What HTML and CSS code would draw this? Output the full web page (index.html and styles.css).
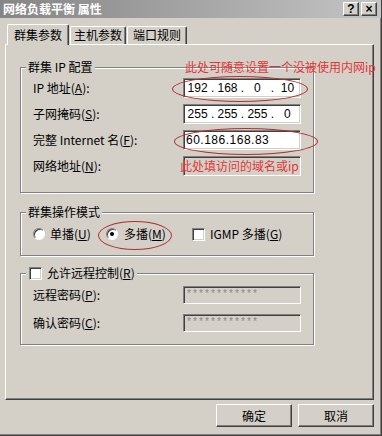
FILE: index.html
```html
<!DOCTYPE html>
<html lang="zh-CN">
<head>
  <meta charset="UTF-8" />
  <title>网络负载平衡 属性</title>
  <link rel="stylesheet" href="styles.css">
</head>
<body>

  <div class="window">
    <div class="titlebar">
      <span class="title-text">网络负载平衡 属性</span>
      <div class="title-buttons">
        <button class="title-btn">?</button>
        <button class="title-btn">×</button>
      </div>
    </div>

    <div class="content">
      <div class="tabs">
        <div class="tab tab-1 active">群集参数</div>
        <div class="tab tab-2">主机参数</div>
        <div class="tab tab-3">端口规则</div>
      </div>

      <div class="panel">
        <fieldset class="group group-ip">
          <legend>群集 IP 配置</legend>
          <div class="group-body">
            <div class="row">
              <label class="label">IP 地址(<u>A</u>):</label>
              <div class="field ip">
                <span class="octet">192</span><span class="dot">.</span><span class="octet">168</span><span class="dot">.</span><span class="octet">0</span><span class="dot">.</span><span class="octet">10</span>
              </div>
            </div>
            <div class="row">
              <label class="label">子网掩码(<u>S</u>):</label>
              <div class="field ip">
                <span class="octet">255</span><span class="dot">.</span><span class="octet">255</span><span class="dot">.</span><span class="octet">255</span><span class="dot">.</span><span class="octet">0</span>
              </div>
            </div>
            <div class="row">
              <label class="label">完整 Internet 名(<u>F</u>):</label>
              <div class="field name">60.186.168.83</div>
            </div>
            <div class="row">
              <label class="label">网络地址(<u>N</u>):</label>
              <div class="field disabled"></div>
            </div>
          </div>
        </fieldset>

        <fieldset class="group group-mode">
          <legend>群集操作模式</legend>
          <div class="group-body">
            <div class="options">
              <div class="option opt-uni"><span class="radio"></span><span>单播(<u>U</u>)</span></div>
              <div class="option opt-multi"><span class="radio checked"></span><span>多播(<u>M</u>)</span></div>
              <div class="option"><span class="check"></span><span>IGMP 多播(<u>G</u>)</span></div>
            </div>
          </div>
        </fieldset>

        <fieldset class="group group-remote">
          <legend><span class="check"></span><span>允许远程控制(<u>R</u>)</span></legend>
          <div class="group-body">
            <div class="row row-tall">
              <label class="label">远程密码(<u>P</u>):</label>
              <div class="field disabled pw">************</div>
            </div>
            <div class="row row-tall">
              <label class="label">确认密码(<u>C</u>):</label>
              <div class="field disabled pw">************</div>
            </div>
          </div>
        </fieldset>
      </div>

      <div class="actions">
        <button class="btn">确定</button>
        <button class="btn">取消</button>
      </div>
    </div>

    <!-- anotações em vermelho por cima do diálogo -->
    <div class="note note-ip">此处可随意设置一个没被使用内网ip</div>
    <div class="note note-name">此处填访问的域名或ip</div>
    <div class="ring ring-ip"></div>
    <div class="ring ring-name"></div>
    <div class="ring ring-multi"></div>
  </div>

</body>
</html>
```

FILE: styles.css
```css
* {
  box-sizing: border-box;
}

body {
  margin: 0;
  font-family: "Noto Sans CJK SC", "Liberation Sans", sans-serif;
  font-size: 12px;
  line-height: 14px;
  color: #000;
  background: #d4d0c8;
}

.window {
  position: relative;
  width: 382px;
  height: 436px;
  background: #d4d0c8;
  border-right: 1px solid #404040;
  border-bottom: 1px solid #404040;
  box-shadow: inset -1px -1px 0 #808080;
}

.titlebar {
  height: 18px;
  display: flex;
  align-items: center;
  justify-content: space-between;
  padding: 0 4px 0 3px;
  background: linear-gradient(to right, #858585, #c4c4c4);
  color: #fff;
  font-weight: bold;
}

.title-buttons {
  display: flex;
  gap: 2px;
}

.title-btn {
  width: 16px;
  height: 14px;
  padding: 0;
  border: 1px solid;
  border-color: #fff #404040 #404040 #fff;
  box-shadow: inset -1px -1px 0 #808080;
  background: #d4d0c8;
  color: #000;
  font: bold 12px/12px "Liberation Sans", sans-serif;
}

.content {
  padding: 6px 0 0 5px;
}

.tabs {
  display: flex;
  align-items: flex-end;
  height: 20px;
  padding-left: 2px;
  gap: 1px;
}

.tab {
  height: 18px;
  border: 1px solid #fff;
  border-bottom: none;
  border-right-color: #404040;
  box-shadow: inset -1px 0 0 #808080;
  border-radius: 2px 2px 0 0;
  line-height: 16px;
  text-align: center;
  background: #d4d0c8;
}

.tab-1 { width: 62px; }
.tab-2 { width: 56px; }
.tab-3 { width: 60px; }

.tab.active {
  height: 21px;
  margin-bottom: -1px;
  line-height: 19px;
  position: relative;
  z-index: 1;
}

.panel {
  width: 369px;
  height: 356px;
  border: 1px solid;
  border-color: #fff #404040 #404040 #fff;
  box-shadow: inset -1px -1px 0 #808080;
  padding: 15px 0 0 14px;
}

.group {
  width: 294px;
  min-width: 0;
  margin: 0;
  padding: 0;
  border: 1px solid #808080;
  box-shadow: 1px 1px 0 #fff, inset 1px 1px 0 #fff;
}

.group legend {
  margin-left: 5px;
  padding: 0 2px;
  height: 14px;
  line-height: 14px;
  background: #d4d0c8;
  display: flex;
  align-items: center;
  gap: 5px;
}

.group-ip .group-body {
  padding: 1px 12px 13px;
}

.group-mode {
  margin-top: 12px;
}

.group-mode .group-body {
  padding: 5px 12px 11px;
}

.group-remote {
  margin-top: 10px;
}

.group-remote legend {
  padding-left: 3px;
}

.group-remote .group-body {
  padding: 1px 12px 7px;
}

.row {
  display: flex;
  align-items: center;
  height: 26px;
}

.row-tall {
  height: 28px;
}

.label {
  width: 150px;
}

.field {
  width: 118px;
  height: 20px;
  border: 1px solid;
  border-color: #808080 #fff #fff #808080;
  box-shadow: inset 1px 1px 0 #404040, inset -1px -1px 0 #d4d0c8;
  background: #fff;
  padding: 0 1px 0 2px;
  display: flex;
  align-items: center;
  font-family: "Liberation Sans", sans-serif;
}

.field.disabled {
  background: #d4d0c8;
  color: #8a8a8a;
}

.field.name {
  letter-spacing: 0.5px;
}

.field.pw {
  height: 18px;
  font-family: "Liberation Mono", monospace;
  font-size: 10px;
}

.octet {
  width: 24px;
  text-align: center;
}

.dot {
  width: 7px;
  text-align: center;
}

.options {
  display: flex;
  align-items: center;
  height: 20px;
}

.option {
  display: flex;
  align-items: center;
  gap: 5px;
}

.opt-uni { width: 73px; }
.opt-multi { width: 86px; gap: 6px; }

.radio {
  width: 12px;
  height: 12px;
  border-radius: 50%;
  background: #fff;
  border: 1px solid;
  border-color: #808080 #fff #fff #808080;
  box-shadow: inset 1px 1px 0 #404040;
  display: flex;
  align-items: center;
  justify-content: center;
}

.radio.checked::after {
  content: "";
  width: 4px;
  height: 4px;
  border-radius: 50%;
  background: #000;
}

.check {
  width: 13px;
  height: 13px;
  background: #fff;
  border: 1px solid;
  border-color: #808080 #fff #fff #808080;
  box-shadow: inset 1px 1px 0 #404040, inset -1px -1px 0 #d4d0c8;
}

.actions {
  display: flex;
  justify-content: flex-end;
  gap: 6px;
  width: 369px;
  margin-top: 4px;
}

.btn {
  width: 76px;
  height: 23px;
  padding: 0;
  border: 1px solid;
  border-color: #fff #404040 #404040 #fff;
  box-shadow: inset -1px -1px 0 #808080;
  background: #d4d0c8;
  color: #000;
  font-family: "Noto Sans CJK SC", sans-serif;
  font-size: 12px;
}

/* anotações */
.note {
  position: absolute;
  color: #e23636;
  line-height: 14px;
  white-space: nowrap;
}

.note-ip {
  left: 185px;
  top: 60px;
}

.note-name {
  left: 180px;
  top: 159px;
}

.ring {
  position: absolute;
  border: 1px solid #b03030;
  border-radius: 50%;
}

.ring-ip {
  left: 172px;
  top: 76px;
  width: 136px;
  height: 26px;
}

.ring-name {
  left: 174px;
  top: 128px;
  width: 144px;
  height: 27px;
}

.ring-multi {
  left: 98px;
  top: 221px;
  width: 74px;
  height: 29px;
}
```
